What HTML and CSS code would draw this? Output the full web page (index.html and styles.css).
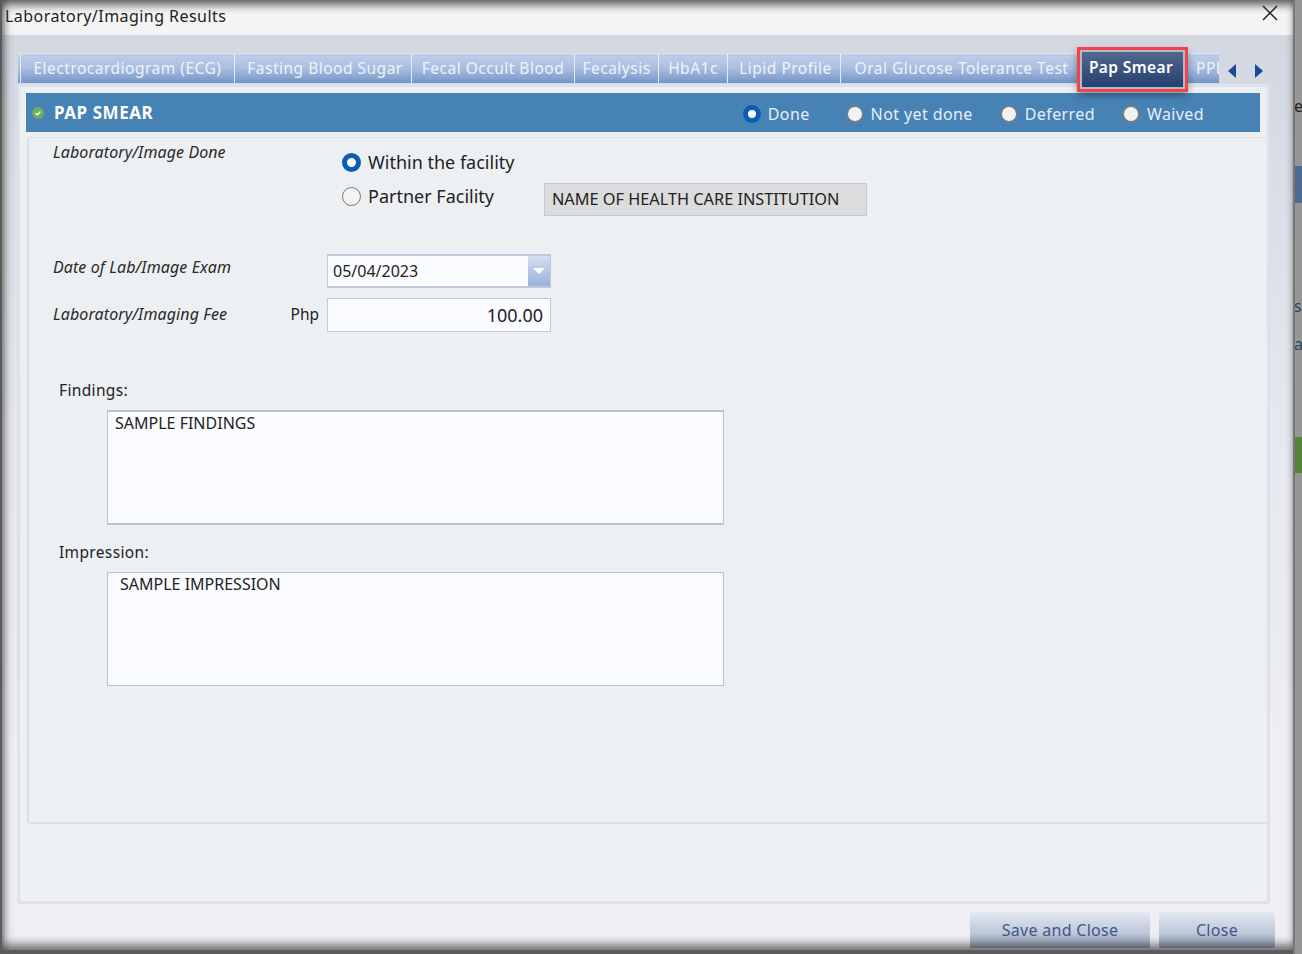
FILE: index.html
```html
<!DOCTYPE html>
<html lang="en">
<head>
    <meta charset="UTF-8">
    <title>Laboratory/Imaging Results</title>
    <link rel="stylesheet" href="styles.css">
</head>
<body>
    <div class="dialog">
        <div class="titlebar">
            <span class="title">Laboratory/Imaging Results</span>
            <svg class="close-x" width="16" height="16" viewBox="0 0 16 16"><path d="M1 1L15 15M15 1L1 15" stroke="#222" stroke-width="1.5" fill="none"/></svg>
        </div>

        <div class="content">
            <!-- Tabs -->
            <div class="tabs-row">
                <div class="tabs">
                    <div class="tab tab-ecg">Electrocardiogram (ECG)</div>
                    <div class="tab tab-fbs">Fasting Blood Sugar</div>
                    <div class="tab tab-fob">Fecal Occult Blood</div>
                    <div class="tab tab-fec">Fecalysis</div>
                    <div class="tab tab-hba">HbA1c</div>
                    <div class="tab tab-lip">Lipid Profile</div>
                    <div class="tab tab-ogt">Oral Glucose Tolerance Test</div>
                    <div class="tab tab-pap active">Pap Smear</div>
                    <div class="tab tab-ppd">PPD Test</div>
                </div>
                <div class="tab-arrows">
                    <svg width="9" height="14" viewBox="0 0 9 14"><path d="M8 0V14L0 7Z" fill="#1a4a96"/></svg>
                    <svg width="9" height="14" viewBox="0 0 9 14"><path d="M0 0V14L8 7Z" fill="#1a4a96"/></svg>
                </div>
            </div>

            <div class="panel">
                <div class="header-bar">
                    <svg class="ok-icon" width="12" height="12" viewBox="0 0 12 12"><circle cx="6" cy="6" r="6" fill="#6cae5c"/><path d="M3.5 6.2L5.3 7.8L8.5 4.6" stroke="#fff" stroke-width="1.4" fill="none"/></svg>
                    <span class="header-title">PAP SMEAR</span>
                    <div class="status-options">
                        <label class="status status-done"><span class="dot dot-on"></span>Done</label>
                        <label class="status"><span class="dot"></span>Not yet done</label>
                        <label class="status"><span class="dot"></span>Deferred</label>
                        <label class="status"><span class="dot"></span>Waived</label>
                    </div>
                </div>

                <div class="form-panel">
                    <div class="facility">
                        <div class="field-label">Laboratory/Image Done</div>
                        <div class="facility-options">
                            <div class="facility-opt facility-within">
                                <span class="radio radio-on"></span>Within the facility
                            </div>
                            <div class="facility-opt">
                                <span class="radio"></span><span class="partner-text">Partner Facility</span>
                                <div class="institution">NAME OF HEALTH CARE INSTITUTION</div>
                            </div>
                        </div>
                    </div>

                    <div class="form-row">
                        <div class="row-label date-label"><span class="field-label">Date of Lab/Image Exam</span></div>
                        <div class="input date-input">
                            <span class="date-value">05/04/2023</span>
                            <span class="date-btn"><span class="date-caret"></span></span>
                        </div>
                    </div>
                    <div class="form-row fee-row">
                        <div class="row-label fee-label"><span class="field-label">Laboratory/Imaging Fee</span><span class="php">Php</span></div>
                        <div class="input fee-input">100.00</div>
                    </div>

                    <div class="block-label findings-label">Findings:</div>
                    <div class="textbox">SAMPLE FINDINGS</div>
                    <div class="block-label impression-label">Impression:</div>
                    <div class="textbox textbox-imp">SAMPLE IMPRESSION</div>
                </div>
            </div>

            <div class="footer">
                <button class="btn btn-save">Save and Close</button>
                <button class="btn btn-close">Close</button>
            </div>
        </div>
    </div>

    <!-- Seite hinter dem Dialog -->
    <div class="behind">
        <span class="behind-text behind-e">e</span>
        <div class="behind-blue"></div>
        <span class="behind-text behind-ss">ss</span>
        <span class="behind-text behind-a">a</span>
        <div class="behind-green"></div>
    </div>
</body>
</html>
```

FILE: styles.css
```css
/* Grundlayout */
body {
    margin: 0;
    width: 1302px;
    height: 954px;
    overflow: hidden;
    display: flex;
    background-color: #5c5c5c;
    font-family: "Noto Sans", "Open Sans", sans-serif;
    color: #222;
}

.dialog {
    position: relative;
    margin-left: 2px;
    width: 1291px;
    height: 950px;
    background: linear-gradient(to bottom, #d2d7e0 4%, #e6e8ef 45%, #eeeef3 80%);
    display: flex;
    flex-direction: column;
}
/* Schatten am Rand */
.dialog::after {
    content: "";
    position: absolute;
    inset: 0;
    pointer-events: none;
    box-shadow: inset 0 8px 8px -3px rgba(60, 60, 60, 0.8), inset 8px 0 8px -5px rgba(80, 80, 80, 0.55), inset 0 -9px 9px -3px rgba(70, 70, 70, 0.7);
}

/* Titelleiste */
.titlebar {
    height: 35px;
    flex: none;
    background-color: #f4f4f4;
    display: flex;
    align-items: center;
    justify-content: space-between;
    padding: 0 15px 4px 3px;
    box-sizing: border-box;
}
.title {
    font-size: 16px;
    letter-spacing: 0.45px;
}
.close-x {
    margin-bottom: 5px;
}

.content {
    flex: 1;
    display: flex;
    flex-direction: column;
    padding: 18px 18px 0 16px;
}

/* Tabs */
.tabs-row {
    display: flex;
    height: 30px;
    flex: none;
}
.tabs {
    display: flex;
    width: 1201px;
    background: linear-gradient(to bottom, #c0cfe7, #a9bee0 50%, #7594c6);
    border-top: 1px solid #dbe4f2;
    box-sizing: border-box;
}
.tab {
    box-sizing: border-box;
    border-left: 1px solid #e6edf7;
    font-size: 15.5px;
    letter-spacing: 0.5px;
    color: #eef3fa;
    white-space: nowrap;
    text-align: center;
    line-height: 28px;
    overflow: hidden;
}
.tab-ecg { width: 214px; margin-left: 2px; }
.tab-fbs { width: 177px; padding-left: 4px; }
.tab-fob { width: 163px; }
.tab-fec { width: 84px; }
.tab-hba { width: 69px; }
.tab-lip { width: 113px; padding-left: 3px; }
.tab-ogt { width: 238px; padding-left: 4px; }
.tab-pap { width: 105px; }
.tab-ppd { width: 34px; text-align: left; border-left: none; padding-left: 11px; }

.tab.active {
    margin: -4px 0 -6px 2px;
    padding-right: 3px;
    border: 2px solid #b3bac6;
    outline: 3px solid #f4414a;
    background: linear-gradient(to bottom, #52688f, #24406f);
    color: #fff;
    font-weight: 600;
    letter-spacing: 0.4px;
    line-height: 31px;
    box-shadow: 0 4px 8px 2px rgba(30, 40, 70, 0.55);
    z-index: 1;
}
.tab-arrows {
    display: flex;
    gap: 18px;
    margin: 11px 0 0 9px;
}

/* Hauptbereich */
.panel {
    margin: 1px 0 0 -1px;
    width: 1253px;
    height: 820px;
    box-sizing: border-box;
    background-color: #ecf0f3;
    border: 3px solid #dde2ea;
    border-radius: 2px;
    padding: 6px 0 0 6px;
}
.header-bar {
    width: 1234px;
    height: 39px;
    background-color: #4682b4;
    color: #fff;
    display: flex;
    align-items: center;
    padding-left: 6px;
    box-sizing: border-box;
}
.ok-icon {
    flex: none;
    margin-top: 1px;
}
.header-title {
    font-size: 17px;
    font-weight: 700;
    letter-spacing: 0.55px;
    margin-left: 10px;
}
.status-options {
    margin-left: auto;
    margin-right: 56px;
    margin-top: 2px;
    display: flex;
    align-items: center;
    gap: 27px;
}
.status {
    display: flex;
    align-items: center;
    gap: 7px;
    font-size: 16px;
    letter-spacing: 0.4px;
    color: #e6eff8;
}
.status-done {
    margin-right: 9px;
}
.dot {
    width: 18px;
    height: 18px;
    box-sizing: border-box;
    border-radius: 50%;
    background-color: #f2f2f2;
    border: 2px solid #6f7f8e;
}
.dot-on {
    background-color: #fff;
    border: 5.5px solid #0a5cb5;
}

/* Formular */
.form-panel {
    margin: 5px 0 0 1px;
    width: 1241px;
    height: 687px;
    box-sizing: border-box;
    border-top: 1px solid #dde2ea;
    border-left: 2px solid #d9dfe8;
    border-bottom: 2px solid #d9dfe8;
    border-radius: 4px 0 0 4px;
    padding-left: 24px;
}
.field-label {
    font-size: 16px;
    font-style: italic;
    letter-spacing: 0.1px;
    color: #2a2a2a;
}
.facility {
    height: 116px;
    display: flex;
    align-items: flex-start;
}
.facility > .field-label {
    width: 289px;
    margin-top: 3px;
}
.facility-options {
    margin-top: 7px;
}
.facility-opt {
    display: flex;
    align-items: center;
    font-size: 18px;
    height: 34px;
}
.radio {
    width: 19px;
    height: 19px;
    box-sizing: border-box;
    border-radius: 50%;
    border: 1.5px solid #777;
    background-color: #f4f4f4;
    margin-right: 7px;
    flex: none;
}
.radio-on {
    background-color: #fff;
    border: 5.5px solid #0a5cb5;
}
.partner-text {
    width: 176px;
}
.institution {
    width: 323px;
    height: 33px;
    line-height: 30px;
    box-sizing: border-box;
    padding-left: 7px;
    margin-top: 7px;
    background-color: #dcdcdc;
    border: 1px solid #c2c8d8;
    font-size: 16.3px;
    white-space: nowrap;
}

.form-row {
    display: flex;
    height: 34px;
}
.fee-row {
    margin-top: 10px;
}
.row-label {
    width: 274px;
    display: flex;
    align-items: center;
    justify-content: space-between;
    padding-right: 8px;
    box-sizing: border-box;
}
.date-label {
    padding-bottom: 8px;
}
.fee-label {
    padding-bottom: 3px;
}
.php {
    font-size: 15.5px;
}
.input {
    width: 224px;
    box-sizing: border-box;
    border: 1px solid #c0c8da;
    background-color: #f9fbff;
    font-size: 16px;
}
.date-input {
    display: flex;
    justify-content: space-between;
    border-width: 2px 1px;
}
.date-value {
    line-height: 30px;
    padding-left: 5px;
}
.date-btn {
    width: 22px;
    background: linear-gradient(to bottom, #d3dff1, #98b1dc);
    display: flex;
    align-items: center;
    justify-content: center;
}
.date-caret {
    border-left: 6px solid transparent;
    border-right: 6px solid transparent;
    border-top: 6px solid #fff;
}
.fee-input {
    text-align: right;
    padding-right: 7px;
    line-height: 32px;
    font-size: 18px;
}

.block-label {
    font-size: 15.5px;
    letter-spacing: 0.35px;
    margin-left: 6px;
    height: 22px;
    line-height: 22px;
}
.findings-label {
    margin-top: 47px;
}
.impression-label {
    margin-top: 16px;
}
.textbox {
    margin: 9px 0 0 54px;
    width: 617px;
    height: 115px;
    box-sizing: border-box;
    border: 1px solid #b9c1d4;
    border-width: 2px 1px;
    background-color: #f9fbff;
    font-size: 16px;
    line-height: 22px;
    padding: 0 0 0 7px;
}
.textbox-imp {
    height: 114px;
    padding-left: 12px;
    border-width: 1px;
}

/* Buttons */
.footer {
    display: flex;
    justify-content: flex-end;
    gap: 9px;
    margin-top: 8px;
}
.btn {
    height: 36px;
    border: none;
    border-radius: 2px;
    background: linear-gradient(to bottom, #e4e8f0, #bcc7d8 60%, #8a99b3);
    color: #41558a;
    font-family: inherit;
    font-size: 16px;
    letter-spacing: 0.3px;
    padding: 0;
}
.btn-save {
    width: 180px;
}
.btn-close {
    width: 116px;
}

/* Hintergrundseite rechts */
.behind {
    width: 9px;
    height: 954px;
    flex: none;
    overflow: hidden;
    background-color: #969696;
    border-left: 2px solid #777;
    box-sizing: border-box;
}
.behind-text {
    display: block;
    font-size: 16px;
    line-height: 20px;
    color: #222;
    margin-left: -1px;
}
.behind-e {
    margin-top: 96px;
}
.behind-blue {
    margin-top: 50px;
    height: 37px;
    background-color: #4c6a94;
}
.behind-ss {
    margin-top: 93px;
    color: #33415e;
}
.behind-a {
    margin-top: 18px;
    color: #33415e;
}
.behind-green {
    margin-top: 83px;
    height: 36px;
    background-color: #55843a;
}
```
